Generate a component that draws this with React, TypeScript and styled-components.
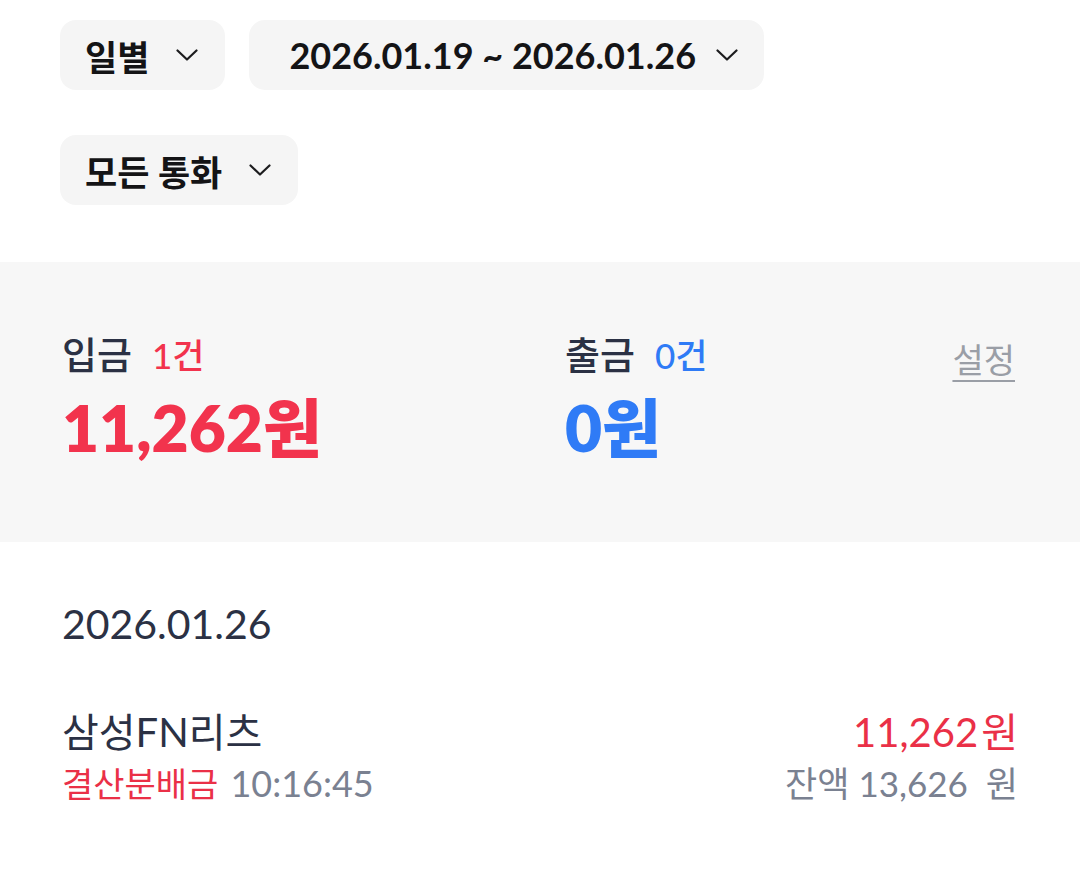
import styled, { createGlobalStyle } from 'styled-components';

const GlobalStyle = createGlobalStyle`
  html, body {
    margin: 0;
    padding: 0;
    background: #ffffff;
  }
  body {
    font-family: Lato, "Noto Sans CJK KR", sans-serif;
    color: #2b3144;
  }
`;

const Chevron = () => (
  <svg width="22" height="12" viewBox="0 0 22 12" fill="none">
    <path d="M1.5 1.5 L11 10.5 L20.5 1.5" stroke="#1c1c1e" strokeWidth="2.2" strokeLinecap="round" strokeLinejoin="round" />
  </svg>
);

export default function App() {
  return (
    <>
      <GlobalStyle />
      <Page>
        <Filters>
          <FilterRow>
            <Chip>
              일별
              <Chevron />
            </Chip>
            <Chip $wide>
              2026.01.19 ~ 2026.01.26
              <Chevron />
            </Chip>
          </FilterRow>
          <FilterRow>
            <Chip>
              모든 통화
              <Chevron />
            </Chip>
          </FilterRow>
        </Filters>

        <Summary>
          <SummaryCol>
            <Label>
              입금<Count $color="#f2334d">1건</Count>
            </Label>
            <Total $color="#f2334d">11,262원</Total>
          </SummaryCol>
          <SummaryCol>
            <Label>
              출금<Count $color="#2f7bf6">0건</Count>
            </Label>
            <Total $color="#2f7bf6">0원</Total>
          </SummaryCol>
          <SettingLink>설정</SettingLink>
        </Summary>

        <List>
          <DateHeader>2026.01.26</DateHeader>
          <Item>
            <ItemLeft>
              <ItemName>삼성FN리츠</ItemName>
              <ItemMeta>
                <Kind>결산분배금</Kind>
                <Time>10:16:45</Time>
              </ItemMeta>
            </ItemLeft>
            <ItemRight>
              <Amount>
                11,262<Won>원</Won>
              </Amount>
              <Balance>잔액 13,626&nbsp;&nbsp;원</Balance>
            </ItemRight>
          </Item>
        </List>
      </Page>
    </>
  );
}

const Page = styled.div`
  width: 1080px;
  min-height: 870px;
`;

const Filters = styled.div`
  display: flex;
  flex-direction: column;
  gap: 45px;
  padding: 20px 60px 0;
`;

const FilterRow = styled.div`
  display: flex;
  gap: 24px;
`;

const Chip = styled.div<{ $wide?: boolean }>`
  display: flex;
  align-items: center;
  gap: ${({ $wide }) => ($wide ? '20px' : '27px')};
  height: 70px;
  padding: ${({ $wide }) => ($wide ? '0 26px 0 40px' : '0 27px 0 25px')};
  border-radius: 16px;
  background: #f5f5f5;
  font-size: ${({ $wide }) => ($wide ? '36px' : '35px')};
  font-weight: 700;
  color: #141416;
  box-sizing: border-box;
`;

const Summary = styled.div`
  position: relative;
  display: grid;
  grid-template-columns: 503px 1fr;
  margin-top: 57px;
  height: 280px;
  box-sizing: border-box;
  padding: 67px 62px 0;
  background: #f7f7f7;
`;

const SummaryCol = styled.div`
  display: flex;
  flex-direction: column;
  gap: 8px;
`;

const Label = styled.div`
  font-size: 38px;
  font-weight: 500;
  color: #2b3144;
  line-height: 50px;
`;

const Count = styled.span<{ $color: string }>`
  margin-left: 20px;
  font-size: 35px;
  color: ${({ $color }) => $color};
`;

const Total = styled.div<{ $color: string }>`
  font-size: 64px;
  font-weight: 800;
  line-height: 80px;
  color: ${({ $color }) => $color};
`;

const SettingLink = styled.a`
  position: absolute;
  top: 72px;
  right: 65px;
  font-size: 34px;
  color: #9a9ea6;
  text-decoration: underline;
  text-underline-offset: 7px;
  text-decoration-thickness: 2px;
`;

const List = styled.div`
  padding: 54px 62px 0;
`;

const DateHeader = styled.div`
  font-size: 41px;
  line-height: 56px;
  color: #2b3144;
`;

const Item = styled.div`
  display: flex;
  justify-content: space-between;
  align-items: flex-start;
  margin-top: 53px;
`;

const ItemLeft = styled.div`
  display: flex;
  flex-direction: column;
`;

const ItemName = styled.div`
  font-size: 40px;
  line-height: 54px;
  color: #2b3144;
`;

const ItemMeta = styled.div`
  display: flex;
  align-items: baseline;
  gap: 12px;
  font-size: 34px;
  line-height: 48px;
  color: #7a8191;
`;

const Kind = styled.span`
  color: #ea3047;
`;

const Time = styled.span`
  font-size: 36px;
`;

const ItemRight = styled.div`
  display: flex;
  flex-direction: column;
  align-items: flex-end;
`;

const Amount = styled.div`
  font-size: 40px;
  line-height: 54px;
  color: #ea3047;
`;

const Won = styled.span`
  margin-left: 3px;
`;

const Balance = styled.div`
  font-size: 35px;
  line-height: 48px;
  color: #7a8191;
`;
